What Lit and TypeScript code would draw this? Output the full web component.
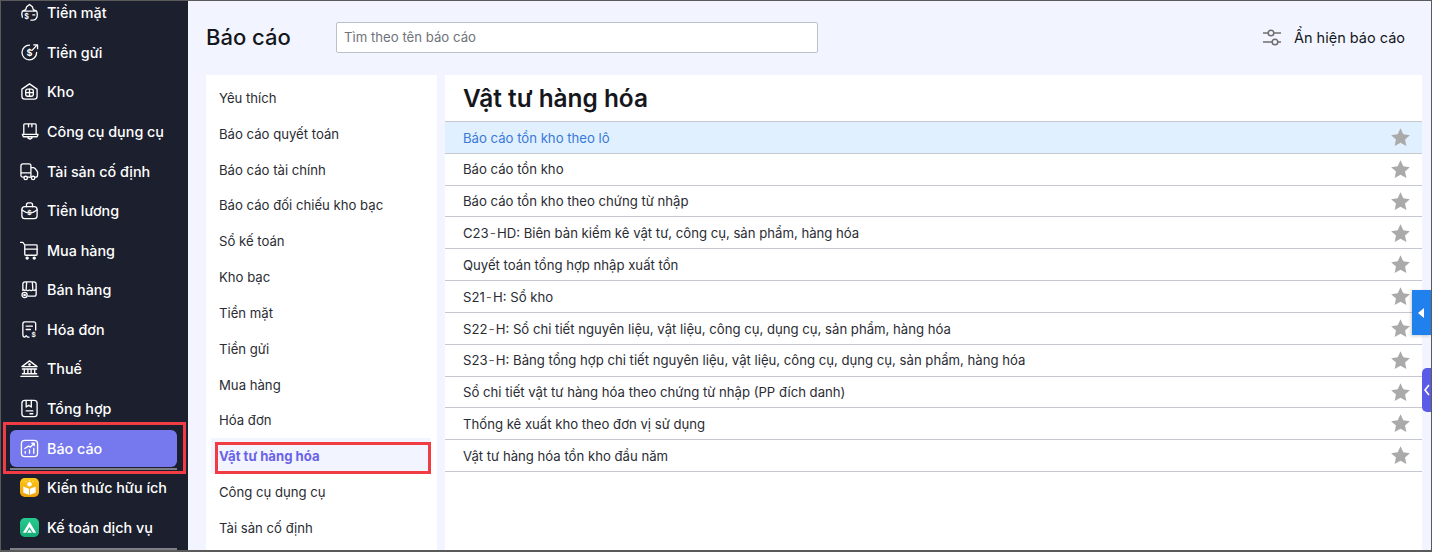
import { LitElement, html, css, svg } from "lit";
import { customElement } from "lit/decorators.js";

const s = (body: any) => html`<svg class="ic" viewBox="0 0 20 20" fill="none" stroke="#fff" stroke-width="1.4" stroke-linecap="round" stroke-linejoin="round">${body}</svg>`;
const dollar = (x: number, y: number, size: number) => svg`<text x=${x} y=${y} font-size=${size} font-weight="700" fill="#fff" stroke="none" font-family="Inter">$</text>`;

const icons: Record<string, any> = {
  cash: s(svg`<path d="M2.500 8.500 6 7l1-3 3-2.500L13 4l1 3 3.500 1.500M2.500 8.500h15M2.500 8.500C1.500 11 1.500 13 2.500 15M17.500 8.500c1 3 1 6-.5 8-.7 1-2 1.500-3 1.500h-2.500M13.500 12.500h2"/>${dollar(4.600, 17, 7.500)}`),
  deposit: s(svg`<path d="M17.500 10A7.700 7.700 0 1 1 10 2.300M13 7.500l5-5.500M14.500 2H18.500v4"/>${dollar(6.800, 14, 9.500)}`),
  box: s(svg`<path d="M2 7.500 10 2l8 5.500V15a3 3 0 0 1-3 3H5a3 3 0 0 1-3-3z"/><rect x="6" y="7.500" width="8" height="7.500" rx="2"/><path d="M10 7.500V15M6 11.200h8"/>`),
  tool: s(svg`<path d="M4 13V3a1 1 0 0 1 1-1h11a1 1 0 0 1 1 1v10M9 2v3M12.500 2v3M2.500 13h16.500l-1 2.500H3.500zM8.500 15.500v1.500l2 1 2-1v-1.500"/>`),
  truck: s(svg`<path d="M3.800 16H3a2 2 0 0 1-2-2V4a2 2 0 0 1 2-2h6.500a2 2 0 0 1 2 2v12M11.500 6H14c1 0 1.500.5 2 1l2.500 3.500V14a2 2 0 0 1-2 2h-.5M8 16h3.500M1 11.500h10.500"/><circle cx="6" cy="16.800" r="1.800"/><circle cx="13.800" cy="16.800" r="1.800"/>`),
  salary: s(svg`<rect x="2" y="6" width="16" height="12.500" rx="3"/><path d="M6.800 6V4a2 2 0 0 1 2-2h2.400a2 2 0 0 1 2 2v2M2 9.500c2.500 2 5 3 8 3s5.500-1 8-3"/>${dollar(7.500, 14.500, 7)}`),
  cart: s(svg`<path d="M.5 1.500h2.500l2 2.500V14a1 1 0 0 0 1 1h11a1 1 0 0 0 1-1V5a1 1 0 0 0-1-1H5M5 8.500h13.500"/><circle cx="7.500" cy="18" r="1.100" fill="#fff"/><circle cx="15" cy="18" r="1.100" fill="#fff"/>`),
  shop: s(svg`<path d="M3 11V4.500A2.500 2.500 0 0 1 5.500 2h9A2.500 2.500 0 0 1 17 4.500V9a2.300 2.300 0 0 1-3.500 1.500 3 3 0 0 1-3.500 0 3 3 0 0 1-3.500 0A2.300 2.300 0 0 1 3 9M7 2 6.500 10M13 2l.5 8M17 9.500V15a2 2 0 0 1-2 2H8.500"/><circle cx="4.800" cy="15.800" r="2.700"/><circle cx="4.800" cy="15.800" r=".7" fill="#fff"/>`),
  invoice: s(svg`<path d="M3 15V4a2 2 0 0 1 2-2h9.500a2 2 0 0 1 2 2v6.500M6.500 6.500h6.500M6.500 10h4.500M3 15c0 2 .8 3 2 3l1.500-1.500L8 18h1.500"/>${dollar(12, 18, 7)}`),
  tax: s(svg`<path d="M2 8 10 2l8 6zM4.500 10.500v4.500M8.300 10.500v4.500M11.700 10.500v4.500M15.500 10.500v4.500M2.500 10.500h15M2.500 15.500h15M1 18.300h18"/><circle cx="10" cy="5.800" r=".7" fill="#fff"/>`),
  ledger: s(svg`<rect x="2" y="1.500" width="16" height="17" rx="3"/><path d="M6.500 1.500v7l2.700-2 2.700 2v-7M6.500 12.500h7M10.500 15.500h3"/>`),
  chart: s(svg`<rect x="1.500" y="1.500" width="17" height="17" rx="3.500"/><path d="M5 10l4-2.500 2 1 4-4M12.500 4.500h2.500v2.500M5.500 15v-2M10 15v-3.500M14.500 15v-5"/>`),
};

const knowledge = html`<svg class="ic" viewBox="0 0 20 20"><defs><linearGradient id="kg" x1="0" y1="0" x2="0" y2="1"><stop offset="0" stop-color="#ffc61a"/><stop offset="1" stop-color="#f0a008"/></linearGradient></defs><rect width="20" height="20" rx="5" fill="url(#kg)"/><path d="M3.500 9l6.500 2.500L16.500 9v6.500L10 18l-6.500-2.500z" fill="#fff"/><path d="M10 11.500V18" stroke="#f5ae0c" stroke-width=".9"/><circle cx="10" cy="6.500" r="2.400" fill="#fff"/><path d="M10 2v1M6 3.500l.8.8M14 3.500l-.8.8" stroke="#fff"/></svg>`;
const service = html`<svg class="ic" viewBox="0 0 20 20"><defs><linearGradient id="sg" x1="0" y1="0" x2="0" y2="1"><stop offset="0" stop-color="#28c98d"/><stop offset="1" stop-color="#14ad75"/></linearGradient></defs><rect width="20" height="20" rx="5" fill="url(#sg)"/><path d="M10 4 17 15.500h-3.300L10 9.500 6.300 15.500H3z" fill="#fff"/><path d="M7.500 15.500 10 11.800l2.500 3.700z" fill="#fff"/></svg>`;

const side: [string, any][] = [
  ["Tiền mặt", icons.cash], ["Tiền gửi", icons.deposit], ["Kho", icons.box], ["Công cụ dụng cụ", icons.tool],
  ["Tài sản cố định", icons.truck], ["Tiền lương", icons.salary], ["Mua hàng", icons.cart], ["Bán hàng", icons.shop],
  ["Hóa đơn", icons.invoice], ["Thuế", icons.tax], ["Tổng hợp", icons.ledger], ["Báo cáo", icons.chart],
  ["Kiến thức hữu ích", knowledge], ["Kế toán dịch vụ", service],
];
const cats = ["Yêu thích", "Báo cáo quyết toán", "Báo cáo tài chính", "Báo cáo đối chiếu kho bạc", "Sổ kế toán", "Kho bạc", "Tiền mặt", "Tiền gửi", "Mua hàng", "Hóa đơn", "Vật tư hàng hóa", "Công cụ dụng cụ", "Tài sản cố định"];
const reports = ["Báo cáo tồn kho theo lô", "Báo cáo tồn kho", "Báo cáo tồn kho theo chứng từ nhập", "C23\u2011HD: Biên bản kiểm kê vật tư, công cụ, sản phẩm, hàng hóa", "Quyết toán tổng hợp nhập xuất tồn", "S21\u2011H: Sổ kho", "S22\u2011H: Sổ chi tiết nguyên liệu, vật liệu, công cụ, dụng cụ, sản phẩm, hàng hóa", "S23\u2011H: Bảng tổng hợp chi tiết nguyên liệu, vật liệu, công cụ, dụng cụ, sản phẩm, hàng hóa", "Sổ chi tiết vật tư hàng hóa theo chứng từ nhập (PP đích danh)", "Thống kê xuất kho theo đơn vị sử dụng", "Vật tư hàng hóa tồn kho đầu năm"];

const withHyphen = (text: string) => {
  const [a, b] = text.split("\u2011");
  return b === undefined ? text : html`${a}<span class="hy">\u2011</span>${b}`;
};

@customElement("app-root")
export class AppRoot extends LitElement {
  static styles = css`
    :host { display: block; width: 1432px; height: 552px; }
    * { box-sizing: border-box; }
    .frame { position: relative; display: flex; width: 1432px; height: 552px; overflow: hidden; border: 1px solid #5a5a5a; border-bottom-width: 2px; background: #f2f5ff; font-family: Inter, "Noto Sans", sans-serif; color: #1f2229; }
    .side { position: relative; flex: none; width: 187px; background: #1c1f2e; overflow: hidden; }
    .side-list { margin-top: -8px; display: flex; flex-direction: column; }
    .side-item { position: relative; height: 39.58px; display: flex; align-items: center; gap: 8px; padding-left: 19px; color: #fff; font-size: 14.35px; font-weight: 500; }
    .side-item.active::before { content: ""; position: absolute; left: 9px; right: 11px; top: 2px; bottom: 1px; border-radius: 6px; background: #7678ee; }
    .side-item > * { position: relative; }
    .ic { width: 19px; height: 19px; flex: none; display: block; }
    .bar { position: absolute; left: 9px; width: 167px; height: 2px; background: #7d7e86; }
    .bar.a { top: 467px; }
    .bar.b { top: 547px; }
    .annot { position: absolute; border: 3px solid #f23c44; pointer-events: none; }
    .annot.a { left: 2px; top: 421px; width: 183px; height: 52px; }
    .annot.b { left: 214px; top: 441px; width: 216px; height: 32px; }
    .main { flex: 1; min-width: 0; display: flex; flex-direction: column; padding: 0 9px 0 18px; }
    .top { height: 74px; flex: none; display: flex; align-items: center; padding-bottom: 1px; }
    h1 { margin: 0 0 2px; width: 130px; font-size: 22px; font-weight: 500; color: #15171c; }
    .search { width: 482px; height: 31px; border: 1px solid #bcc0c8; border-radius: 2px; background: #fff; padding: 0 7px 2px; font-size: 13.2px; color: #70737b; display: flex; align-items: center; }
    .toggle { margin-left: auto; display: flex; align-items: center; gap: 12px; padding-right: 17px; font-size: 14.5px; color: #15171c; }
    .toggle svg { width: 20px; height: 18px; display: block; }
    .panels { flex: 1; min-height: 0; display: flex; gap: 8px; }
    .cats { flex: none; width: 231px; background: #fff; padding: 5.15px 0 0 5px; position: relative; }
    .cat { height: 35.82px; display: flex; align-items: center; padding-left: 8px; font-size: 13.15px; color: #2a2c33; width: 220px; }
    .cat.active { background: #f2f5ff; color: #6a63e8; font-weight: 700; }
    .list { flex: 1; min-width: 0; background: #fff; }
    h2 { margin: 0; height: 47px; padding: 0 0 0 18px; display: flex; align-items: center; font-size: 24.4px; font-weight: 600; color: #15171c; border-bottom: 1px solid #c6c8d0; }
    .row { height: 31.82px; display: flex; align-items: center; justify-content: space-between; padding: .5px 11px 0 18px; font-size: 13.15px; color: #2a2c33; border-bottom: 1px solid #c6c8d0; }
    .row.active { background: #e0f0ff; color: #3a78d8; }
    .hy { margin: 0 1.75px; color: #6d5a50; }
    .star { width: 21px; height: 21px; flex: none; fill: #aaaaaa; display: block; }
    .tab { position: absolute; right: 0; top: 289px; width: 19px; height: 45px; background: #2080ec; display: flex; align-items: center; justify-content: center; box-shadow: -1px 1px 3px rgba(0,0,0,.2); }
    .tab::before { content: ""; border: 5px solid transparent; border-right: 6px solid #fff; border-left: 0; margin-right: 2px; }
    .pill { position: absolute; right: 0; top: 367px; width: 9px; height: 44px; background: #5a5ce8; border-radius: 5px 0 0 5px; display: flex; align-items: center; justify-content: center; }
    .pill svg { width: 8px; height: 12px; display: block; }
  `;

  render() {
    return html`<div class="frame">
      <nav class="side">
        <div class="side-list">
          ${side.map(([t, i]) => html`<div class="side-item ${t === "Báo cáo" ? "active" : ""}">${i}<span>${t}</span></div>`)}
        </div>
        <div class="bar a"></div>
        <div class="bar b"></div>
      </nav>
      <main class="main">
        <div class="top">
          <h1>Báo cáo</h1>
          <div class="search">Tìm theo tên báo cáo</div>
          <div class="toggle">
            <svg viewBox="0 0 20 18" fill="none" stroke="#6f6f6f" stroke-width="1.5"><path d="M1 4h5M12 4h7M1 13h9M16 13h3"/><circle cx="9" cy="4" r="2.800"/><circle cx="13" cy="13" r="2.800"/></svg>
            <span>Ẩn hiện báo cáo</span>
          </div>
        </div>
        <div class="panels">
          <div class="cats">${cats.map((c) => html`<div class="cat ${c === "Vật tư hàng hóa" ? "active" : ""}">${c}</div>`)}</div>
          <div class="list">
            <h2>Vật tư hàng hóa</h2>
            ${reports.map((r, i) => html`<div class="row ${i === 0 ? "active" : ""}"><span>${withHyphen(r)}</span><svg class="star" viewBox="0 0 24 24"><path d="M12 1.500l3.200 6.900 7.500.9-5.500 5.100 1.500 7.400L12 18.100 5.300 21.800l1.500-7.400L1.300 9.300l7.500-.9z"/></svg></div>`)}
          </div>
        </div>
      </main>
      <div class="tab"></div>
      <div class="pill"><svg viewBox="0 0 8 12" fill="none" stroke="#fff" stroke-width="1.6"><path d="M6 1 2 6l4 5"/></svg></div>
      <div class="annot a"></div>
      <div class="annot b"></div>
    </div>`;
  }
}
